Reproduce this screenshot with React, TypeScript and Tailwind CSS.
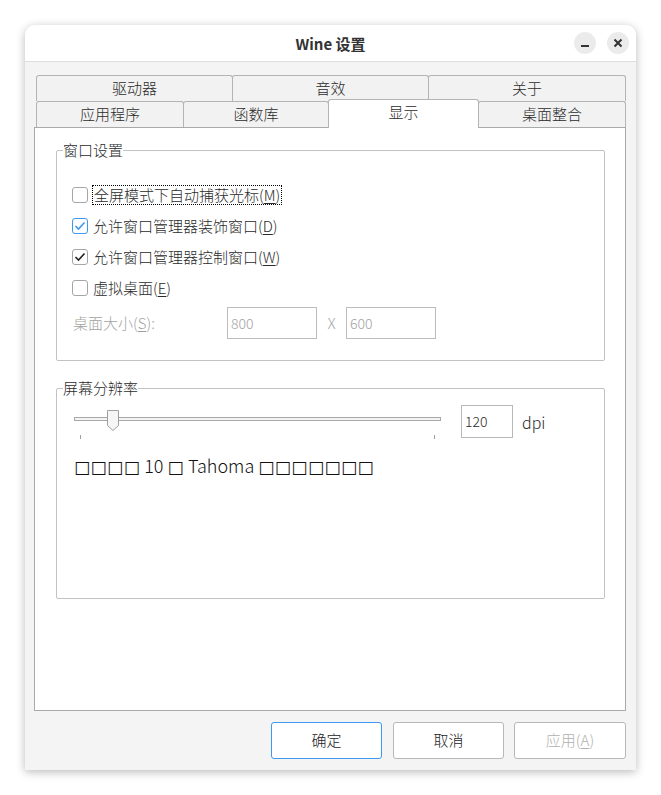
import React from "react";

const U = ({ c }: { c: string }) => <span className="underline underline-offset-2">{c}</span>;

function Box({ state }: { state: "off" | "blue" | "dark" }) {
  const border = state === "blue" ? "border-[#3d98ef]" : "border-[#a6a6a6]";
  return (
    <div className={`w-[16px] h-[16px] shrink-0 rounded-[3px] border ${border} bg-white flex items-center justify-center`}>
      {state !== "off" && (
        <svg width="12" height="10" viewBox="0 0 12 10">
          <polyline
            points="1.5,5 4.5,8 10.5,1.5"
            fill="none"
            stroke={state === "blue" ? "#3d98ef" : "#222"}
            strokeWidth="1.6"
          />
        </svg>
      )}
    </div>
  );
}

const Sq = ({ s }: { s: string }) => (
  <span className="font-['DejaVu_Sans',sans-serif] text-[17px] tracking-[0.5px] font-normal">{s}</span>
);

export default function App() {
  const row1 = [
    { t: "驱动器", w: "w-[197px]" },
    { t: "音效", w: "w-[197px]" },
    { t: "关于", w: "w-[198px]" },
  ];
  return (
    <div className="w-[661px] h-[795px] bg-white pt-[25px] pl-[25px] font-['Noto_Sans_CJK_SC',sans-serif] font-light text-[15px] text-[#2b2b2b]">
      <div className="w-[611px] h-[745px] rounded-t-[10px] bg-[#f4f4f4] shadow-[0_2px_10px_rgba(0,0,0,0.28)] flex flex-col">
        {/* Title bar */}
        <div className="h-[37px] shrink-0 bg-white rounded-t-[10px] border-b border-[#dedede] grid grid-cols-[1fr_auto_1fr] items-center">
          <div />
          <div className="font-bold text-[15px] text-[#333] leading-none">Wine 设置</div>
          <div className="flex justify-end gap-[11px] pr-[7px]">
            <div className="w-[22px] h-[22px] rounded-full bg-[#ebebeb] flex items-center justify-center">
              <div className="w-[8px] h-[2px] bg-[#333] mt-[6px]" />
            </div>
            <div className="w-[22px] h-[22px] rounded-full bg-[#ebebeb] flex items-center justify-center">
              <svg width="10" height="10" viewBox="0 0 10 10">
                <path d="M1.5 1.5 L8.5 8.5 M8.5 1.5 L1.5 8.5" stroke="#333" strokeWidth="2" />
              </svg>
            </div>
          </div>
        </div>

        {/* Body */}
        <div className="flex flex-col pt-[13px] pl-[9px] pr-[10px]">
          {/* Tabs */}
          <div className="ml-[2px] w-[590px]">
            <div className="flex h-[26px]">
              {row1.map((r, i) => (
                <div
                  key={r.t}
                  className={`${r.w} h-[26px] ${i > 0 ? "-ml-px" : ""} border border-b-0 border-[#b4b4b4] rounded-t-[3px] bg-[#f2f2f2] flex items-center justify-center`}
                >
                  {r.t}
                </div>
              ))}
            </div>
            <div className="flex h-[26px] items-start">
              <div className="w-[148px] h-[26px] border border-b-0 border-[#b4b4b4] rounded-t-[3px] bg-[#f2f2f2] flex items-center justify-center">
                应用程序
              </div>
              <div className="w-[146px] h-[26px] -ml-px border border-b-0 border-[#b4b4b4] rounded-t-[3px] bg-[#f2f2f2] flex items-center justify-center">
                函数库
              </div>
              <div className="relative z-10 w-[151px] h-[29px] -mt-[2px] -ml-px border border-b-0 border-[#b4b4b4] rounded-t-[3px] bg-white flex items-center justify-center pb-[3px]">
                显示
              </div>
              <div className="w-[148px] h-[26px] -ml-px border border-b-0 border-[#b4b4b4] rounded-t-[3px] bg-[#f2f2f2] flex items-center justify-center">
                桌面整合
              </div>
            </div>
          </div>

          {/* Panel */}
          <div className="h-[584px] border border-[#a9a9a9] bg-white pt-[12px] pl-[21px] pr-[20px]">
            <fieldset className="h-[221px] border border-[#c2c2c2] rounded-[2px]">
              <legend className="ml-[6px] leading-[20px]">窗口设置</legend>
              <div className="pt-[19px] pl-[15px] flex flex-col">
                <div className="h-[31px] flex items-center">
                  <Box state="off" />
                  <span className="ml-[4px] leading-[18px] px-[1px] border border-dotted border-black">
                    全屏模式下自动捕获光标(<U c="M" />)
                  </span>
                </div>
                <div className="h-[31px] flex items-center">
                  <Box state="blue" />
                  <span className="ml-[5px] leading-[18px]">
                    允许窗口管理器装饰窗口(<U c="D" />)
                  </span>
                </div>
                <div className="h-[31px] flex items-center">
                  <Box state="dark" />
                  <span className="ml-[5px] leading-[18px]">
                    允许窗口管理器控制窗口(<U c="W" />)
                  </span>
                </div>
                <div className="h-[31px] flex items-center">
                  <Box state="off" />
                  <span className="ml-[5px] leading-[18px]">
                    虚拟桌面(<U c="E" />)
                  </span>
                </div>
                <div className="mt-[4px] h-[32px] flex items-center text-[#a3a3a3]">
                  <span className="w-[155px] pl-[1px]">
                    桌面大小(<U c="S" />):
                  </span>
                  <div className="w-[90px] h-[32px] border border-[#bdbdbd] pl-[3px] flex items-center text-[14px]">800</div>
                  <span className="w-[29px] text-center">X</span>
                  <div className="w-[90px] h-[32px] border border-[#bdbdbd] pl-[3px] flex items-center text-[14px]">600</div>
                </div>
              </div>
            </fieldset>

            <fieldset className="mt-[17px] h-[221px] border border-[#c2c2c2] rounded-[2px]">
              <legend className="ml-[6px] leading-[20px]">屏幕分辨率</legend>
              <div className="pt-[7px] pl-[17px]">
                <div className="flex items-start">
                  <div className="relative w-[367px] h-[36px]">
                    <div className="absolute left-0 top-[12px] w-[367px] h-[4px] border border-[#a8a8a8] bg-[#f4f4f4]" />
                    <svg className="absolute left-[33px] top-[5px]" width="12" height="21" viewBox="0 0 12 21">
                      <path d="M0.5 0.5 H11.5 V15.5 L6 20.5 L0.5 15.5 Z" fill="#f6f6f6" stroke="#a0a0a0" />
                    </svg>
                    <div className="absolute left-[6px] top-[30px] w-px h-[4px] bg-[#a0a0a0]" />
                    <div className="absolute left-[360px] top-[30px] w-px h-[4px] bg-[#a0a0a0]" />
                  </div>
                  <div className="ml-[20px] w-[52px] h-[33px] border border-[#b8b8b8] pl-[3px] flex items-center text-[14px] text-[#2b2b2b]">
                    120
                  </div>
                  <span className="ml-[9px] h-[33px] flex items-center text-[16px]">dpi</span>
                </div>
                <div className="mt-[12px] text-[18px] leading-[24px] text-[#111] whitespace-pre">
                  <Sq s="□□□□" /> 10 <Sq s="□" /> Tahoma <Sq s="□□□□□□□" />
                </div>
              </div>
            </fieldset>
          </div>

          {/* Buttons */}
          <div className="mt-[11px] flex justify-end">
            <button className="w-[111px] h-[37px] rounded-[3px] border border-[#3d98ef] bg-white text-[#222]">确定</button>
            <button className="ml-[11px] w-[111px] h-[37px] rounded-[3px] border border-[#b8b8b8] bg-white text-[#222]">取消</button>
            <button className="ml-[10px] w-[112px] h-[37px] rounded-[3px] border border-[#b8b8b8] bg-white text-[#b0b0b0]">
              应用(<U c="A" />)
            </button>
          </div>
        </div>
      </div>
    </div>
  );
}
